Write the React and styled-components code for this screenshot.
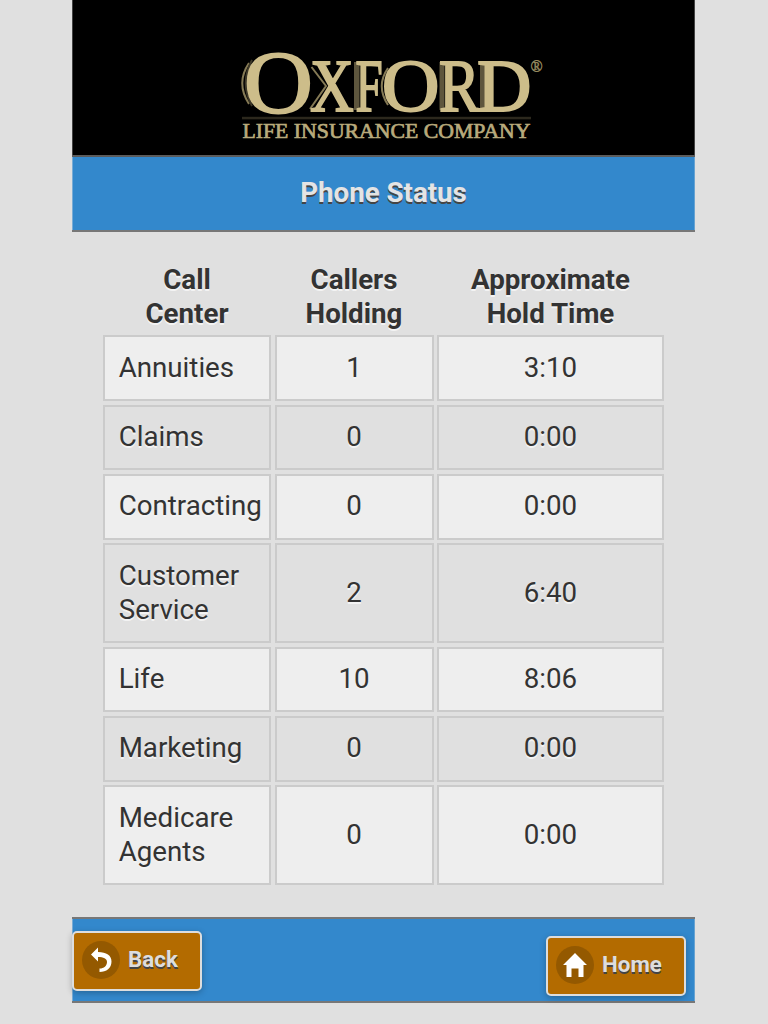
import React from 'react';
import styled, { createGlobalStyle } from 'styled-components';

const GlobalStyle = createGlobalStyle`
  * { box-sizing: border-box; }
  html, body { margin: 0; background: #e0e0e0; }
  body {
    font-family: Roboto, sans-serif;
    font-size: 27.7px;
    line-height: 34.6px;
    color: #333;
    text-shadow: 0 1.7px 0 #f3f3f3;
  }
`;

const Page = styled.div`
  display: flex;
  flex-direction: column;
  width: 623px;
  height: 1024px;
  margin-left: 72px;
`;

const Banner = styled.header`
  height: 155px;
  background: #000;
  border-left: 1px solid rgba(224, 224, 224, 0.3);
  border-right: 1px solid rgba(224, 224, 224, 0.3);
  text-shadow: none;
`;

const Logo = styled.svg`
  display: block;
  width: 621px;
  height: 155px;
`;

const Bar = styled.div`
  display: flex;
  background: #3388cc;
  border: solid #777;
  border-width: 2px 0;
  box-shadow: inset 1px 0 rgba(224, 224, 224, 0.4), inset -1px 0 rgba(224, 224, 224, 0.3);
`;

const TitleBar = styled(Bar)`
  height: 77px;
  align-items: center;
  justify-content: center;
  border-top-color: #5c5c5c;
`;

const Title = styled.h1`
  margin: 0;
  font-size: 27.7px;
  font-weight: 700;
  color: #e4e4e4;
  text-shadow: 0 1.7px 0 #444;
`;

const Table = styled.div`
  display: flex;
  flex-direction: column;
  gap: 3.46px;
  padding: 30.4px 31px 0;
  height: 685px;
`;

const Row = styled.div`
  display: grid;
  grid-template-columns: 168px 159px 227px;
  column-gap: 3.5px;
  height: ${(p) => (p.$tall ? 100.3 : 65.72)}px;
`;

const HeadRow = styled(Row)`
  height: 69.6px;
  padding-top: 0.2px;
`;

const HeadCell = styled.div`
  font-weight: 700;
  text-align: center;
  white-space: pre-line;
`;

const Cell = styled.div`
  display: flex;
  align-items: center;
  justify-content: ${(p) => (p.$name ? 'flex-start' : 'center')};
  padding: ${(p) => (p.$name ? '0 0 0 13.7px' : '0')};
  white-space: pre-line;
  border: 2px solid #cbcbcb;
  background: ${(p) => (p.$light ? '#eee' : '#e0e0e0')};
`;

const Footer = styled(Bar)`
  height: 86px;
  justify-content: space-between;
  padding-right: 9px;
`;

const Button = styled.button`
  display: flex;
  align-items: center;
  width: ${(p) => p.$width}px;
  height: 60px;
  margin: ${(p) => p.$top}px 0 0;
  padding: 0 0 2px 8px;
  gap: 8px;
  border: 2px solid #ddd;
  border-radius: 5px;
  background: #b36b00;
  box-shadow: 0 2px 6px rgba(0, 0, 0, 0.25);
  font: 700 22.4px/28px Roboto, sans-serif;
  color: #ddd;
  text-shadow: 0 1.7px 0 #444;
`;

const Label = styled.span`
  margin-top: -2px;
`;

const IconDisc = styled.span`
  display: flex;
  width: 38px;
  height: 38px;
  border-radius: 50%;
  background: #945900;
`;

const letters = [
  { ch: 'O', x: 243.7, y: 111.7, size: 88, sx: 1.09 },
  { ch: 'X', x: 310, y: 110.5, size: 74, sx: 0.82 },
  { ch: 'F', x: 355.5, y: 110.5, size: 74, sx: 0.66 },
  { ch: 'O', x: 381.7, y: 110.8, size: 73.5, sx: 1.09 },
  { ch: 'R', x: 439, y: 110.5, size: 74, sx: 0.83 },
  { ch: 'D', x: 477, y: 110.5, size: 74, sx: 1.02 },
];

function OxfordLogo() {
  return (
    <Logo viewBox="73 0 621 155">
      <g fill="none" stroke="#857a55" strokeWidth="2">
        <path d="M249 63 Q235.500 83 249 104" />
        <path d="M252 60 Q239.500 83 252 106" stroke="#3c3727" />
        <path d="M388 68 Q375.500 86 388 105" />
        <path d="M311.500 67 L326 86 L310 109" />
      </g>
      <g fill="#5e563d">
        <rect x="354" y="62" width="5.500" height="48" />
        <rect x="439.500" y="62" width="5" height="48" />
        <rect x="480" y="62" width="5" height="48" />
      </g>
      {letters.map((l, i) => (
        <text
          key={i}
          transform={`translate(${l.x} ${l.y}) scale(${l.sx} 1)`}
          fontFamily="Liberation Serif, serif"
          fontSize={l.size}
          fill="#cdbd8a"
          stroke="#cdbd8a"
          strokeWidth="1.9"
        >
          {l.ch}
        </text>
      ))}
      <rect x="242" y="116.8" width="289" height="2.5" fill="#2c281d" />
      <text
        x="242.5" y="138" textLength="288" lengthAdjust="spacingAndGlyphs"
        fontFamily="Liberation Serif, serif" fontSize="21.5" fill="#b8aa7c"
        stroke="#b8aa7c" strokeWidth="0.7"
      >
        LIFE INSURANCE COMPANY
      </text>
      <text x="530.500" y="72" fontFamily="Liberation Serif, serif" fontSize="16" fill="#94895f" stroke="#94895f" strokeWidth="0.4">®</text>
    </Logo>
  );
}

const BackIcon = () => (
  <svg width="38" height="38" viewBox="0 0 38 38">
    <path d="M9 13.5 L16 6.5 V11 C24.5 11 29.5 14.5 29.5 20.5 C29.5 27 24.5 31 17.5 31 V27.5 C22 27.5 25 24.8 25 21 C25 17.7 21.5 16 16 16 V20.5 Z" fill="#fff" />
  </svg>
);

const HomeIcon = () => (
  <svg width="38" height="38" viewBox="0 0 38 38">
    <path d="M19 7 L31 19 H27.5 V31 H22.5 V22.5 H15.5 V31 H10.5 V19 H7 Z" fill="#fff" />
  </svg>
);

const rows = [
  ['Annuities', '1', '3:10'],
  ['Claims', '0', '0:00'],
  ['Contracting', '0', '0:00'],
  ['Customer\nService', '2', '6:40'],
  ['Life', '10', '8:06'],
  ['Marketing', '0', '0:00'],
  ['Medicare\nAgents', '0', '0:00'],
];

export default function App() {
  return (
    <>
      <GlobalStyle />
      <Page>
        <Banner><OxfordLogo /></Banner>
        <TitleBar><Title>Phone Status</Title></TitleBar>
        <Table>
          <HeadRow>
            <HeadCell>{'Call\nCenter'}</HeadCell>
            <HeadCell>{'Callers\nHolding'}</HeadCell>
            <HeadCell>{'Approximate\nHold Time'}</HeadCell>
          </HeadRow>
          {rows.map(([name, holding, time], i) => (
            <Row key={name} $tall={name.includes('\n')}>
              <Cell $name $light={i % 2 === 0}>{name}</Cell>
              <Cell $light={i % 2 === 0}>{holding}</Cell>
              <Cell $light={i % 2 === 0}>{time}</Cell>
            </Row>
          ))}
        </Table>
        <Footer>
          <Button $width={130} $top={12}><IconDisc><BackIcon /></IconDisc><Label>Back</Label></Button>
          <Button $width={140} $top={17}><IconDisc><HomeIcon /></IconDisc><Label>Home</Label></Button>
        </Footer>
      </Page>
    </>
  );
}
